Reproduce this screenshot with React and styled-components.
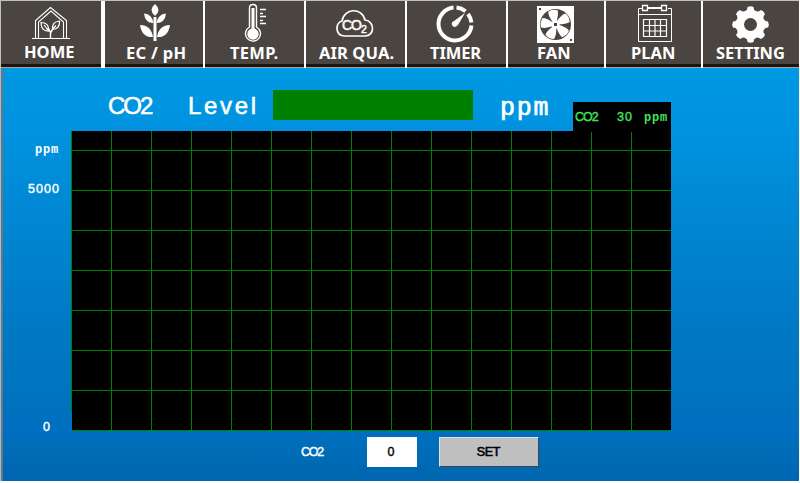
import React from "react";
import styled, { createGlobalStyle } from "styled-components";

const GlobalStyle = createGlobalStyle`
  * { box-sizing: border-box; }
  body { margin: 0; background: #fff; overflow: hidden; }
`;

const Screen = styled.div`
  width: 799px;
  height: 481px;
  display: flex;
  flex-direction: column;
  font-family: "Liberation Sans", Arial, sans-serif;
  color: #fff;
  white-space: pre;
`;

const Nav = styled.nav`
  display: flex;
  height: 68px;
  background: #fff;
  border-top: 1px solid #c0c0bc;
  border-left: 1px solid #c0c0bc;
`;

const NavItem = styled.div`
  width: ${(p) => p.$width}px;
  margin-right: ${(p) => p.$gap}px;
  height: 67px;
  display: flex;
  flex-direction: column;
  background: #4a4541;
  border-bottom: 1px solid #aaa49f;
  box-shadow: inset 0 -3px #1b1510;
`;

const IconSlot = styled.div`
  height: 42px;
  padding-left: ${(p) => p.$left}px;

  svg { display: block; overflow: visible; }
`;

const NavLabel = styled.span`
  padding-left: ${(p) => p.$left}px;
  margin-top: ${(p) => p.$top || 0}px;
  font: 700 16.5px/20px "Noto Sans", sans-serif;
  letter-spacing: ${(p) => p.$spacing ?? 0}px;
`;

const Body = styled.main`
  height: 413px;
  border-left: 1px solid #b8b8b8;
  box-shadow: inset 2px 0 #587b91;
  background: linear-gradient(#0099e2 0, #0092e0 60px, #008bd7 120px, #007bc7 240px, #0073be 330px, #006ec1 365px, #006db7 382px, #0065b0 100%);
`;

const Header = styled.header`
  display: flex;
  height: 63px;
  padding: 22px 0 0 107px;
`;

const Title = styled.span`
  width: ${(p) => p.$width}px;
  height: 30px;
  font-size: 24px;
  line-height: 32px;
  letter-spacing: ${(p) => p.$spacing}px;
  -webkit-text-stroke: 0.55px #fff;
`;

const Unit = styled.span`
  width: 74px;
  padding-left: 1px;
  font: 25px/37px "Liberation Mono", monospace;
  letter-spacing: 1.8px;
  -webkit-text-stroke: 0.7px #fff;
`;

const Meter = styled.div`
  width: 200px;
  height: 30px;
  margin-right: 26px;
  background: #008000;
`;

const Reading = styled.div`
  width: 98px;
  height: 30px;
  margin-top: 12px;
  display: flex;
  background: #000;
  color: #42e05a;
`;

const Small = styled.span`
  width: ${(p) => p.$width || "auto"};
  padding-left: ${(p) => p.$left || 0}px;
  font: ${(p) => (p.$mono ? '700 12px/33px "Liberation Mono", monospace' : '12.5px/30px "Liberation Sans", sans-serif')};
  letter-spacing: ${(p) => p.$spacing || 0}px;
  -webkit-text-stroke: ${(p) => (p.$mono ? 0 : 0.4)}px currentColor;
`;

const ChartRow = styled.section`
  display: flex;
  height: 300px;
`;

const Axis = styled.div`
  width: 70px;
  height: 300px;
  display: grid;
  grid-template-rows: 33px 40px 1fr 18px;
`;

const Tick = styled(Small)`
  line-height: ${(p) => p.$line}px;
`;

const Footer = styled.footer`
  display: flex;
  height: 50px;
  padding: 6px 0 0 300px;
`;

const ValueBox = styled.div`
  width: 50px;
  height: 30px;
  margin-right: 22px;
  padding-right: 2px;
  background: #fff;
  color: #000;
  text-align: center;
`;

const SetButton = styled.button`
  width: 100px;
  height: 30px;
  padding: 0 1px 0 0;
  border: 1px solid;
  border-color: #e4e4e4 #444 #444 #e4e4e4;
  background: #bfbfbf;
  color: #000;
  font: 12.5px/27px "Liberation Sans", sans-serif;
  letter-spacing: -0.3px;
  -webkit-text-stroke: 0.6px #000;
`;

const HomeIcon = () => (
  <svg width="38" height="34" fill="none" stroke="#fff" strokeWidth="1.1">
    <path d="M0 32.5H38M3.5 32V14.5L18.5 1.5L34.5 14.5V32M6.5 32V16L19 5L31.5 16V32" />
    <path d="M18.500 32V26Q17.500 24 15 22.500M18.500 27Q20 23 24 19.500" strokeWidth="1.5" />
    <path d="M17 25Q9 25.500 9 16.500Q17 16.500 17 25ZM20.500 23.500Q19.500 16 27.500 15Q28 23 20.500 23.500ZM12 19L16 24" strokeWidth="1.200" />
  </svg>
);

const PlantIcon = () => (
  <svg width="30" height="38" fill="#fff">
    <path d="M15 0Q8 6 15 12Q22 6 15 0ZM13.5 13H16.5V37H13.5Z" />
    <path d="M13.5 19Q5 19 4 9.500Q12 10 13.500 19ZM16.500 19Q25 19 26 9.500Q18 10 16.500 19ZM13 33Q2 34 0 21Q11 21 13 33ZM17 33Q28 34 30 21Q19 21 17 33Z" />
  </svg>
);

const ThermometerIcon = () => (
  <svg width="22" height="38" fill="none" stroke="#fff" strokeWidth="1.4">
    <path d="M4.500 23V4Q4.500 .5 8 .5T11.500 4V23A7.500 7.500 0 1 1 4.500 23Z" />
    <circle cx="8" cy="30" r="5" fill="#fff" />
    <path d="M8 4V29" strokeWidth="3" />
    <path d="M15 5.500H21M15 9.500H18M15 12.500H21M15 16.500H18M15 19.500H21" strokeWidth="1.3" />
  </svg>
);

const CloudIcon = () => (
  <svg width="37" height="28">
    <path d="M8 26C-1 25-1 13 6 11C8-2 26-3 29 10C39 11 39 26 29 26Z" fill="none" stroke="#fff" strokeWidth="1.7" />
    <text x="6" y="19.500" fill="#fff" stroke="#fff" strokeWidth=".5" fontSize="14" letterSpacing="-1">
      CO<tspan dy="3" fontSize="10.500">2</tspan>
    </text>
  </svg>
);

const TimerIcon = () => (
  <svg width="38" height="38">
    <path d="M20.500 2.550A16.500 16.500 0 0 1 29.500 6.200M32 9A16.500 16.500 0 0 1 35.450 17.500M35.450 20.500A16.500 16.500 0 1 1 17.500 2.550" fill="none" stroke="#fff" strokeWidth="4" />
    <path d="M29 8L22 20Q18 24 16 20Q15 17 18 16Z" fill="#fff" />
  </svg>
);

const FanIcon = () => (
  <svg width="37" height="37">
    <path d="M0 0H37V37H0Z" fill="#fff" />
    <circle cx="18.500" cy="18.500" r="15.500" fill="#4a4541" />
    <g fill="#fff">
      {[-12, 60, 132, 204, 276].map((angle) => (
        <path key={angle} transform={`rotate(${angle} 18.5 18.5)`} d="M17 17Q13 9 14 4.500Q18.500 2.500 23.500 5Q24 9 19.500 17Z" />
      ))}
      <circle cx="18.500" cy="18.500" r="4" />
    </g>
    <path d="M17 17H20V20H17ZM2 2H4V4H2ZM33 33H35V35H33Z" fill="#4a4541" />
  </svg>
);

const CalendarIcon = () => (
  <svg width="36" height="38" fill="none" stroke="#fff">
    <path d="M5 3.500H1.500V36.500H34.500V3.500H31M1 9.500H35" />
    <path d="M11 3H24" strokeWidth="2" />
    <path d="M5.500 .5H10.500V5.500H5.500ZM24.500 .5H29.500V5.500H24.500Z" strokeWidth="1.300" />
    <path d="M6.500 14.500H29.500V31.500H6.500ZM12.500 14V32M18 14V32M23.500 14V32M6 20.500H30M6 26H30" strokeWidth="1.200" />
  </svg>
);

const GearIcon = () => (
  <svg width="37" height="37">
    <g fill="#fff">
      <circle cx="18.500" cy="18.500" r="14.500" />
      {[0, 45, 90, 135, 180, 225, 270, 315].map((angle) => (
        <path key={angle} transform={`rotate(${angle} 18.5 18.5)`} d="M13.500 5Q15.500 4 15.500 1Q18.500-.5 21.500 1Q21.500 4 23.500 5Z" />
      ))}
    </g>
    <circle cx="18.500" cy="18.500" r="6.500" fill="#4a4541" />
  </svg>
);

const tabs = [
  { label: "HOME", width: 100, gap: 4, Icon: HomeIcon, icon: 31, text: 23, top: 5, labelTop: -1, spacing: 0 },
  { label: "EC / pH", width: 98, gap: 2, Icon: PlantIcon, icon: 35, text: 21, top: 3, spacing: 0.3 },
  { label: "TEMP.", width: 99, gap: 2, Icon: ThermometerIcon, icon: 40, text: 25, top: 3, spacing: 0.3 },
  { label: "AIR QUA.", width: 99, gap: 2, Icon: CloudIcon, icon: 30, text: 13, top: 9, spacing: 0.1 },
  { label: "TIMER", width: 99, gap: 2, Icon: TimerIcon, icon: 29, text: 23, top: 4, spacing: -0.1 },
  { label: "FAN", width: 96, gap: 2, Icon: FanIcon, icon: 29, text: 29, top: 5, spacing: 0.1 },
  { label: "PLAN", width: 95, gap: 2, Icon: CalendarIcon, icon: 31, text: 25, top: 4, spacing: 0 },
  { label: "SETTING", width: 96, gap: 0, Icon: GearIcon, icon: 29, text: 13, top: 5, spacing: -0.1 },
];

const IconOffset = styled.div`
  padding-top: ${(p) => p.$top}px;
`;

const Chart = () => (
  <svg width="600" height="300" shapeRendering="crispEdges">
    <path d="M1 0H600V300H1Z" fill="#000" />
    <g fill="#008000">
      <path d="M0 0H1V281H0Z" />
      {Array.from({ length: 14 }, (_, i) => (
        <rect key={i} x={40 + i * 40} y={i > 11 ? 1 : 0} width="1" height="299" />
      ))}
      {Array.from({ length: 8 }, (_, i) => (
        <rect key={i} x="1" y={19 + i * 40} width="599" height="1" />
      ))}
    </g>
  </svg>
);

export default function App() {
  return (
    <>
      <GlobalStyle />
      <Screen>
        <Nav>
          {tabs.map(({ label, width, gap, Icon, icon, text, top, labelTop, spacing }) => (
            <NavItem key={label} $width={width} $gap={gap}>
              <IconSlot $left={icon}>
                <IconOffset $top={top}><Icon /></IconOffset>
              </IconSlot>
              <NavLabel $left={text} $top={labelTop} $spacing={spacing}>{label}</NavLabel>
            </NavItem>
          ))}
        </Nav>
        <Body>
          <Header>
            <Title $width={80} $spacing={-2}>CO2</Title>
            <Title $width={85} $spacing={2.7}>Level</Title>
            <Meter />
            <Unit>ppm</Unit>
            <Reading>
              <Small $left={2} $width="44px" $spacing={-1}>CO2</Small>
              <Small $width="27px" $spacing={1}>30</Small>
              <Small $mono $spacing={0.8}>ppm</Small>
            </Reading>
          </Header>
          <ChartRow>
            <Axis>
              <Tick $mono $left={34} $spacing={0.8} $line={39}>ppm</Tick>
              <Tick $left={27} $spacing={1.05} $line={50}>5000</Tick>
              <span />
              <Tick $left={42} $line={28}>0</Tick>
            </Axis>
            <Chart />
          </ChartRow>
          <Footer>
            <Small $width="66px" $spacing={-1.2}>CO2</Small>
            <ValueBox><Small>0</Small></ValueBox>
            <SetButton>SET</SetButton>
          </Footer>
        </Body>
      </Screen>
    </>
  );
}
